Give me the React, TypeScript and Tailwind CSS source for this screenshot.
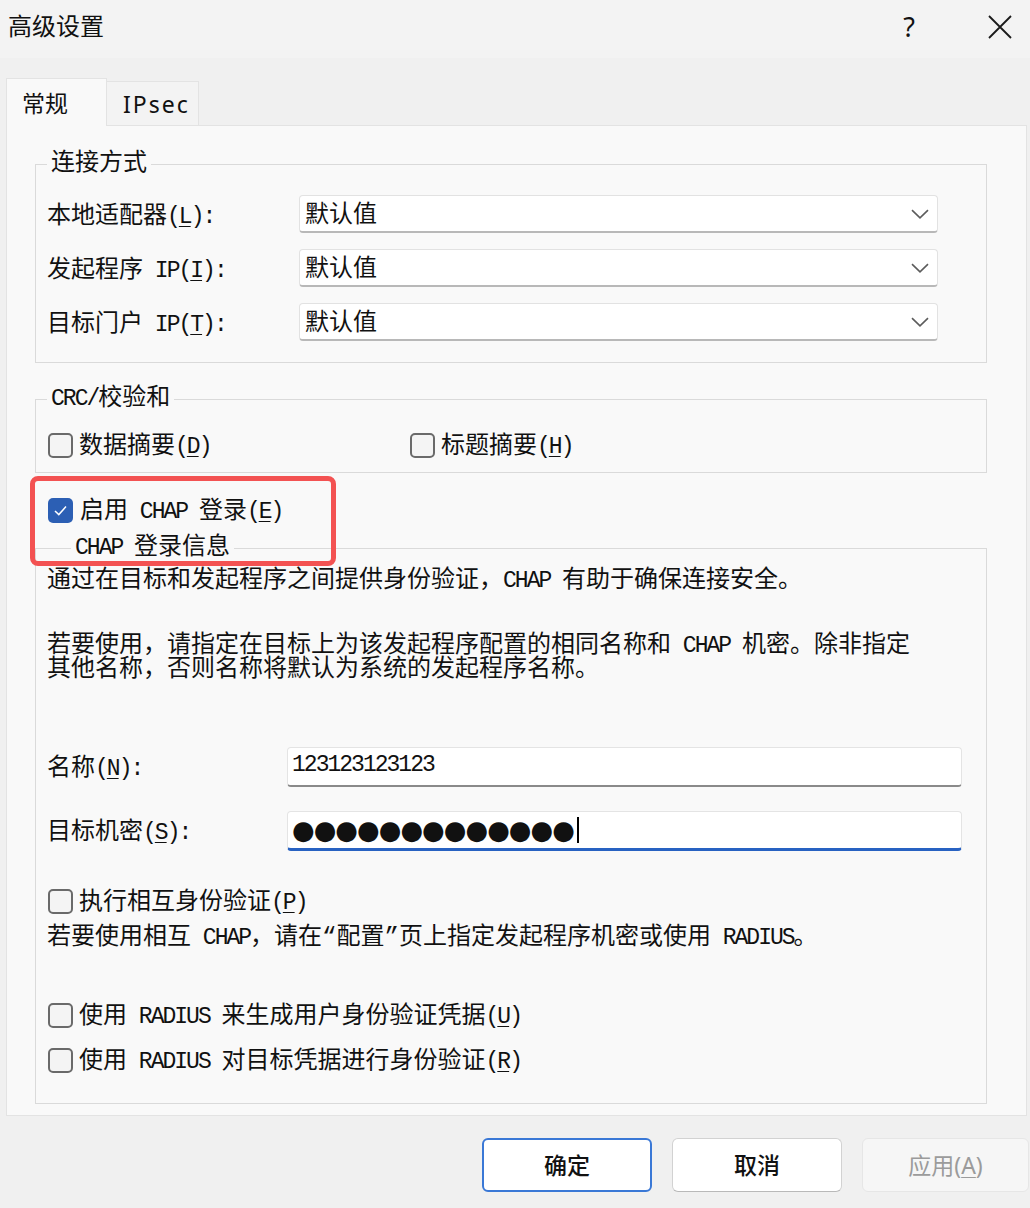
import React from "react"

const ui = "font-['Noto_Sans','Noto_Sans_CJK_SC',sans-serif]"
const sim = "font-['Liberation_Mono','Noto_Sans_CJK_SC',monospace]"
const latin = "text-[23px] tracking-[-2px] leading-[0px]"

// Mixed CJK / Latin text. Latin runs get a half-width pitch,
// "&" marks the mnemonic letter that follows it.
function Mix({ text }: { text: string }) {
  const runs: { ascii: boolean; chars: React.ReactNode[] }[] = []
  let under = false
  Array.from(text).forEach((ch, i) => {
    if (ch === "&") {
      under = true
      return
    }
    const ascii = ch.charCodeAt(0) < 128
    const node = under ? (
      <u key={i} className="underline underline-offset-[3px] decoration-1">{ch}</u>
    ) : (
      ch
    )
    under = false
    const last = runs[runs.length - 1]
    if (last && last.ascii === ascii) last.chars.push(node)
    else runs.push({ ascii, chars: [node] })
  })
  return (
    <>
      {runs.map((r, i) =>
        r.ascii ? (
          <span key={i} className={latin}>{r.chars}</span>
        ) : (
          <React.Fragment key={i}>{r.chars}</React.Fragment>
        )
      )}
    </>
  )
}

function Chevron() {
  return (
    <svg width="18" height="10" viewBox="0 0 18 10" fill="none">
      <path d="M1 1.2 L9 8.8 L17 1.2" stroke="#5c5c5c" strokeWidth="1.6" />
    </svg>
  )
}

function Combo() {
  return (
    <div className="w-[639px] h-[38px] bg-white border border-[#e2e2e2] border-b-2 border-b-[#b8b8b8] rounded-[4px] flex items-center justify-between pl-[5px] pr-[8px]">
      <span className="pt-[5px]">默认值</span>
      <Chevron />
    </div>
  )
}

function CheckBox({ checked }: { checked?: boolean }) {
  if (checked) {
    return (
      <span className="w-[25px] h-[25px] rounded-[5px] bg-[#2c5fb4] flex items-center justify-center shrink-0">
        <svg width="25" height="25" viewBox="0 0 25 25" fill="none">
          <path d="M7 13 L10.8 16.6 L18 8.6" stroke="#ffffff" strokeWidth="1.5" />
        </svg>
      </span>
    )
  }
  return <span className="w-[25px] h-[25px] rounded-[5px] border-2 border-[#6a6a6a] bg-[#f4f4f4] shrink-0" />
}

function Group({ title, legendClass, className, children }: { title: string; legendClass?: string; className?: string; children: React.ReactNode }) {
  return (
    <fieldset className={`border border-[#dadada] pl-[11px] ${className ?? ""}`}>
      <legend className={`px-[4px] leading-[24px] ${legendClass ?? ""}`}>
        <Mix text={title} />
      </legend>
      {children}
    </fieldset>
  )
}

function CheckRow({ text, className }: { text: string; className?: string }) {
  return (
    <div className={`h-[26px] flex items-center gap-[6px] pl-px ${className ?? ""}`}>
      <CheckBox />
      <span className="pt-[3px] leading-[24px]">
        <Mix text={text} />
      </span>
    </div>
  )
}

export default function App() {
  return (
    <div className={`relative w-[1030px] h-[1208px] overflow-hidden bg-[#f0f0f0] text-[#111] ${sim} text-[24px] leading-[24px]`}>

      {/* title bar */}
      <div className={`h-[58px] bg-[#f3f3f3] flex items-center justify-between pl-[8px] ${ui}`}>
        <span className="text-[24px] leading-none -mt-[6px]">高级设置</span>
        <div className="flex items-center -mt-[4px]">
          <span className="text-[27px] mr-[73px]">?</span>
          <svg width="24" height="24" viewBox="0 0 24 24" className="mr-[18px]">
            <path d="M1 1 L23 23 M23 1 L1 23" stroke="#1a1a1a" strokeWidth="1.8" />
          </svg>
        </div>
      </div>

      {/* tabs */}
      <div className={`mt-[20px] pl-[6px] flex items-end ${ui}`}>
        <div className="relative z-10 -mb-px h-[48px] w-[101px] bg-[#f9f9f9] border border-b-0 border-[#e3e3e3] flex items-center pl-[15px] text-[23px]">
          常规
        </div>
        <div className="h-[44px] w-[92px] bg-[#f3f3f3] border-t border-r border-[#e3e3e3] flex items-center pl-[16px] text-[23px] tracking-[2px]">
          IPsec
        </div>
      </div>

      {/* panel */}
      <div className="ml-[6px] mr-[3px] bg-[#f9f9f9] border border-[#e3e3e3] pt-[26px] pl-[28px] pr-[39px] pb-[11px]">

        <Group title="连接方式" className="pt-[19px] pb-[21px]">
          <div className="flex flex-col gap-[16px]">
            <div className="flex items-center h-[38px]">
              <span className="w-[252px] pt-[5px]"><Mix text="本地适配器(&L):" /></span>
              <Combo />
            </div>
            <div className="flex items-center h-[38px]">
              <span className="w-[252px] pt-[5px]"><Mix text="发起程序 IP(&I):" /></span>
              <Combo />
            </div>
            <div className="flex items-center h-[38px]">
              <span className="w-[252px] pt-[5px]"><Mix text="目标门户 IP(&T):" /></span>
              <Combo />
            </div>
          </div>
        </Group>

        <Group title="CRC/校验和" className="mt-[24px] pt-[21px] pb-[14px]">
          <div className="flex items-center">
            <CheckRow text="数据摘要(&D)" className="w-[362px]" />
            <CheckRow text="标题摘要(&H)" />
          </div>
        </Group>

        <div className="mt-[24px] ml-[13px] h-[26px] flex items-center gap-[7px]">
          <CheckBox checked />
          <span className="pt-[3px]"><Mix text="启用 CHAP 登录(&E)" /></span>
        </div>

        <Group title="CHAP 登录信息" legendClass="ml-[24px]" className="mt-[13px] pt-[9px] pb-[30px]">
          <p className="leading-[24px]">
            <Mix text="通过在目标和发起程序之间提供身份验证，CHAP 有助于确保连接安全。" />
          </p>
          <p className="mt-[41px] leading-[24px] w-[880px]">
            <Mix text="若要使用，请指定在目标上为该发起程序配置的相同名称和 CHAP 机密。除非指定其他名称，否则名称将默认为系统的发起程序名称。" />
          </p>

          <div className="mt-[65px] flex items-center">
            <span className="w-[240px] pt-[3px]"><Mix text="名称(&N):" /></span>
            <div className="w-[675px] h-[40px] bg-white border border-[#e4e4e4] border-b-2 border-b-[#8a8a8a] rounded-[4px] flex items-center pl-[4px] pb-[3px]">
              <Mix text="123123123123" />
            </div>
          </div>

          <div className="mt-[24px] flex items-center">
            <span className="w-[240px] pt-[3px]"><Mix text="目标机密(&S):" /></span>
            <div className="w-[675px] h-[40px] bg-white border border-[#e4e4e4] border-b-[3px] border-b-[#2862c2] rounded-[4px] flex items-center pl-[4px]">
              <span className="font-['DejaVu_Sans'] text-[26px] tracking-[-1px] leading-none">●●●●●●●●●●●●●</span>
              <span className="ml-[3px] w-[2px] h-[26px] bg-black" />
            </div>
          </div>

          <CheckRow text="执行相互身份验证(&P)" className="mt-[37px]" />
          <p className="mt-[12px] leading-[24px]">
            <Mix text="若要使用相互 CHAP，请在“配置”页上指定发起程序机密或使用 RADIUS。" />
          </p>

          <CheckRow text="使用 RADIUS 来生成用户身份验证凭据(&U)" className="mt-[52px]" />
          <CheckRow text="使用 RADIUS 对目标凭据进行身份验证(&R)" className="mt-[19px]" />
        </Group>
      </div>

      {/* buttons */}
      <div className={`mt-[22px] flex justify-end gap-[20px] pr-px ${ui} text-[23px]`}>
        <button className="w-[170px] h-[54px] bg-white border-2 border-[#3a78d6] rounded-[6px] font-medium">确定</button>
        <button className="w-[170px] h-[54px] bg-white border border-[#d2d2d2] border-b-[#b9b9b9] rounded-[6px] font-medium">取消</button>
        <button className="w-[167px] h-[54px] bg-[#f6f6f6] border border-[#e6e6e6] rounded-[6px] text-[#9b9b9b]">
          应用(<u className="underline underline-offset-[3px] decoration-1">A</u>)
        </button>
      </div>

      {/* annotation */}
      <div className="absolute left-[30px] top-[476px] w-[306px] h-[90px] border-[5px] border-[#f35252] rounded-[8px] pointer-events-none" />
    </div>
  )
}
